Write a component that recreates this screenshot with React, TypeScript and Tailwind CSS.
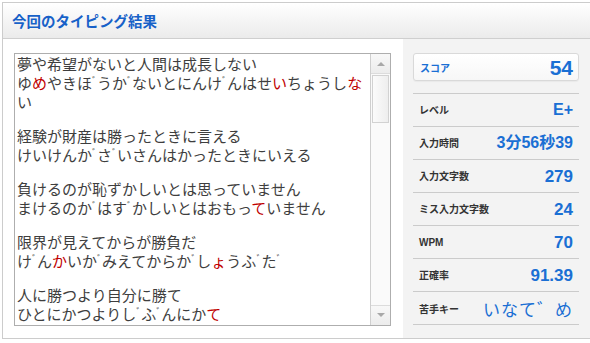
const lines = [
  "夢や希望がないと人間は成長しない",
  "ゆ[め]やきほﾞうかﾞないとにんけﾞんはせ[い]ちょうし[な]",
  "い",
  "",
  "経験が財産は勝ったときに言える",
  "けいけんかﾞさﾞいさんはかったときにいえる",
  "",
  "負けるのが恥ずかしいとは思っていません",
  "まけるのかﾞはすﾞかしいとはおもっ[て]いません",
  "",
  "限界が見えてからが勝負だ",
  "けﾞん[か]いかﾞみえてからかﾞし[ょ]うふﾞたﾞ",
  "",
  "人に勝つより自分に勝て",
  "ひとにかつよりしﾞふﾞんにか[て]",
]

const stats = [
  { label: "レベル", value: "E+", size: "text-[16px]" },
  { label: "入力時間", value: "3分56秒39", size: "text-[16px]" },
  { label: "入力文字数", value: "279", size: "text-[17px]" },
  { label: "ミス入力文字数", value: "24", size: "text-[17px]" },
  { label: "WPM", value: "70", size: "text-[17px]" },
  { label: "正確率", value: "91.39", size: "text-[17px]" },
]

// the separate voiced marks sit tight after their kana in the original
function Plain({ text }: { text: string }) {
  const bits = text.split(/(ﾞ)/)
  return (
    <>
      {bits.map((b, i) =>
        b === "ﾞ" ? (
          <span key={i} className="text-[10px] leading-none align-[4px]">{b}</span>
        ) : (
          <span key={i}>{b}</span>
        )
      )}
    </>
  )
}

function Line({ text }: { text: string }) {
  if (!text) return <div className="h-[15px]" />
  const parts = text.split(/(\[[^\]]+\])/)
  return (
    <div className="h-[19px] leading-[19px] whitespace-nowrap">
      {parts.map((p, i) =>
        p.startsWith("[") ? (
          <span key={i} className="text-[#c00000]">{p.slice(1, -1)}</span>
        ) : (
          <Plain key={i} text={p} />
        )
      )}
    </div>
  )
}

function Scrollbar() {
  return (
    <div className="w-[20px] h-full border-l border-[#cfcfcf] bg-[#fafafa] flex flex-col">
      <div className="h-[20px] border-b border-[#dcdcdc] bg-gradient-to-b from-[#f8f8f8] to-[#ececec] flex items-center justify-center">
        <svg width="8" height="5" viewBox="0 0 8 5"><path d="M0 5 L4 1 L8 5 Z" fill="#a8a8a8" /></svg>
      </div>
      <div className="mx-[1px] mt-[1px] h-[48px] border border-[#d2d2d2] bg-gradient-to-r from-[#fbfbfb] to-[#eeeeee]" />
      <div className="flex-1" />
      <div className="h-[20px] border-t border-[#dcdcdc] bg-gradient-to-b from-[#f8f8f8] to-[#ececec] flex items-center justify-center">
        <svg width="8" height="5" viewBox="0 0 8 5"><path d="M0 0 L4 4 L8 0 Z" fill="#a8a8a8" /></svg>
      </div>
    </div>
  )
}

export default function App() {
  return (
    <div className="w-[590px] h-[343px] bg-white overflow-hidden">
      <div className="ml-[2px] mt-[2px] w-[600px] h-[337px] border border-[#cccccc] flex flex-col">
        <div className="h-[36px] shrink-0 border-b border-[#cfcfcf] bg-gradient-to-b from-[#ffffff] to-[#ebebeb] flex items-center pl-[9px]">
          <span className="text-[14.5px] font-bold text-[#1761c8] font-['Noto_Sans_CJK_JP',sans-serif]">今回のタイピング結果</span>
        </div>
        <div className="flex-1 flex">
          <div className="w-[400px] pl-[11px] pt-[14px]">
            <div className="w-[377px] h-[273px] border border-[#aeaeae] bg-white flex">
              <div className="flex-1 pl-[2px] text-[15px] text-[#3e3e3e] font-['Noto_Sans_CJK_JP',sans-serif] overflow-hidden">
                {lines.map((l, i) => (
                  <Line key={i} text={l} />
                ))}
              </div>
              <Scrollbar />
            </div>
          </div>
          <div className="flex-1 bg-[#f3f3f3] pl-[10px] pt-[14px]">
            <div className="w-[166px]">
              <div className="h-[28px] rounded-[3px] border border-[#d9d9d9] bg-gradient-to-b from-[#ffffff] to-[#f7f7f7] shadow-[0_1px_1px_rgba(0,0,0,0.04)] flex items-center justify-between pl-[6px] pr-[5px]">
                <span className="text-[10px] font-bold text-[#1a6fd4] font-['Noto_Sans_CJK_JP',sans-serif]">スコア</span>
                <span className="text-[21px] font-bold text-[#1a6fd4] font-['Liberation_Sans',sans-serif] leading-none">54</span>
              </div>
              <div className="mt-[12px] border-t border-[#cbcbcb]">
                {stats.map((s) => (
                  <div key={s.label} className="h-[33px] border-b border-[#cbcbcb] flex items-center justify-between pl-[6px] pr-[6px]">
                    <span className="text-[10px] font-bold text-[#333] font-['Liberation_Sans','Noto_Sans_CJK_JP',sans-serif]">{s.label}</span>
                    <span className={`${s.size} font-bold text-[#1a6fd4] font-['Liberation_Sans','Noto_Sans_CJK_JP',sans-serif] leading-none`}>{s.value}</span>
                  </div>
                ))}
                <div className="h-[33px] border-b border-[#cbcbcb] flex items-center justify-between pl-[6px] pr-[6px]">
                  <span className="text-[10px] font-bold text-[#333] font-['Noto_Sans_CJK_JP',sans-serif]">苦手キー</span>
                  <span className="text-[17px] text-[#1a6fd4] font-['Noto_Sans_CJK_JP',sans-serif] leading-none tracking-[1px]">いなて゛め</span>
                </div>
              </div>
            </div>
          </div>
        </div>
      </div>
    </div>
  )
}
